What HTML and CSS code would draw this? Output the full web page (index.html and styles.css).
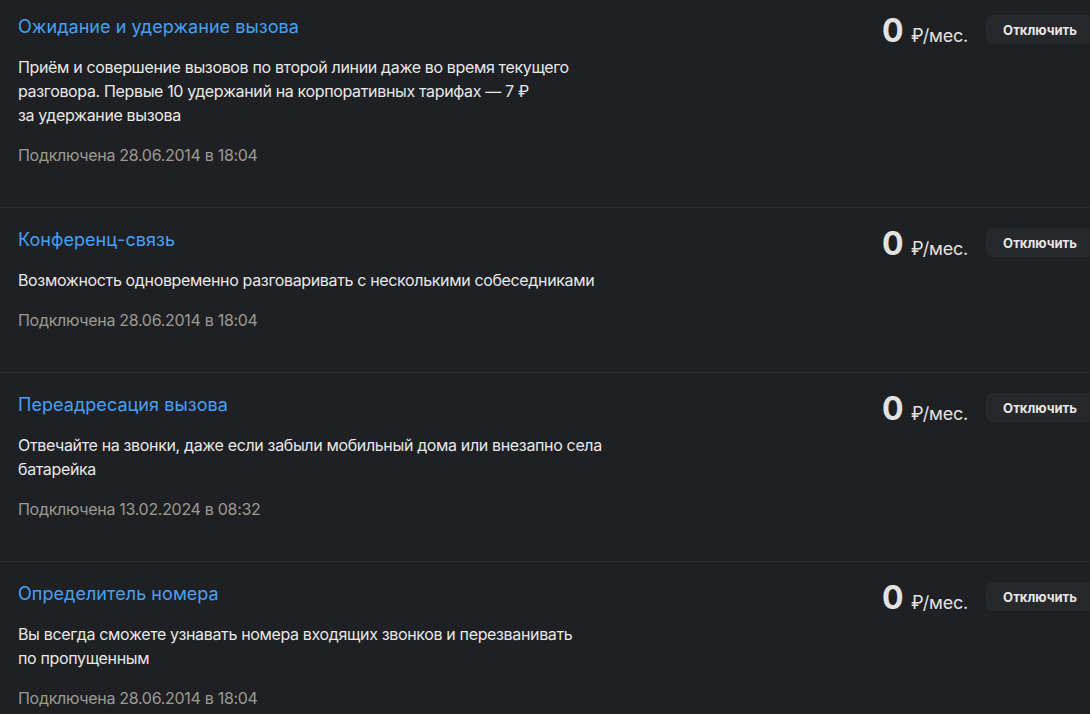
FILE: index.html
```html
<!DOCTYPE html>
<html lang="ru">
<head>
    <meta charset="UTF-8">
    <meta name="viewport" content="width=device-width, initial-scale=1.0">
    <title>Подключённые услуги</title>
    <link rel="stylesheet" href="styles.css">
</head>
<body>
    <div class="services">
        <div class="service">
            <div class="service-info">
                <a class="service-title" href="#">Ожидание и удержание вызова</a>
                <p class="service-desc">Приём и совершение вызовов по второй линии даже во время текущего<br>разговора. Первые 10 удержаний на корпоративных тарифах — 7 ₽<br>за удержание вызова</p>
                <div class="service-date">Подключена 28.06.2014 в 18:04</div>
            </div>
            <div class="service-side">
                <div class="price"><span class="price-value">0</span> <span class="price-unit">₽/мес.</span></div>
                <button class="btn-off">Отключить</button>
            </div>
        </div>

        <div class="service">
            <div class="service-info">
                <a class="service-title" href="#">Конференц-связь</a>
                <p class="service-desc">Возможность одновременно разговаривать с несколькими собеседниками</p>
                <div class="service-date">Подключена 28.06.2014 в 18:04</div>
            </div>
            <div class="service-side">
                <div class="price"><span class="price-value">0</span> <span class="price-unit">₽/мес.</span></div>
                <button class="btn-off">Отключить</button>
            </div>
        </div>

        <div class="service">
            <div class="service-info">
                <a class="service-title" href="#">Переадресация вызова</a>
                <p class="service-desc">Отвечайте на звонки, даже если забыли мобильный дома или внезапно села<br>батарейка</p>
                <div class="service-date">Подключена 13.02.2024 в 08:32</div>
            </div>
            <div class="service-side">
                <div class="price"><span class="price-value">0</span> <span class="price-unit">₽/мес.</span></div>
                <button class="btn-off">Отключить</button>
            </div>
        </div>

        <div class="service">
            <div class="service-info">
                <a class="service-title" href="#">Определитель номера</a>
                <p class="service-desc">Вы всегда сможете узнавать номера входящих звонков и перезванивать<br>по пропущенным</p>
                <div class="service-date">Подключена 28.06.2014 в 18:04</div>
            </div>
            <div class="service-side">
                <div class="price"><span class="price-value">0</span> <span class="price-unit">₽/мес.</span></div>
                <button class="btn-off">Отключить</button>
            </div>
        </div>
    </div>
</body>
</html>
```

FILE: styles.css
```css
body {
    margin: 0;
    background-color: #1f2023;
    font-family: Inter, 'Noto Sans', sans-serif;
    color: #e6e6e6;
    overflow: hidden;
}

.services {
    width: calc(100% + 4px);
}

.service {
    display: flex;
    justify-content: space-between;
    align-items: flex-start;
    padding: 20px 0 40px 18px;
    border-bottom: 1px solid #2a2b2f;
}

.service:first-child {
    padding-top: 15px;
}

.service-info {
    display: flex;
    flex-direction: column;
    gap: 16px;
}

.service-title {
    color: #45a0f5;
    font-size: 18px;
    line-height: 24px;
    letter-spacing: 0.05px;
    text-decoration: none;
    align-self: flex-start;
}

.service-desc {
    margin: 0;
    font-size: 16px;
    line-height: 24px;
    letter-spacing: -0.35px;
    color: #e8e8e8;
}

.service-date {
    font-size: 16px;
    line-height: 24px;
    letter-spacing: -0.3px;
    color: #9e9a92;
}

.service-side {
    display: flex;
    align-items: flex-start;
    gap: 18px;
}

.price {
    color: #e2e2e2;
    line-height: 32px;
    white-space: nowrap;
}

.price-value {
    font-size: 32px;
    font-weight: 700;
    margin-right: 3px;
}

.price-unit {
    font-size: 18px;
    letter-spacing: -0.2px;
}

.btn-off {
    height: 29px;
    padding: 0 17px;
    background-color: #26282b;
    color: #e6e6e6;
    font-family: inherit;
    font-size: 13px;
    font-weight: 700;
    border: none;
    border-radius: 6px;
    cursor: pointer;
}

.btn-off:hover {
    background-color: #2f3135;
}
```
